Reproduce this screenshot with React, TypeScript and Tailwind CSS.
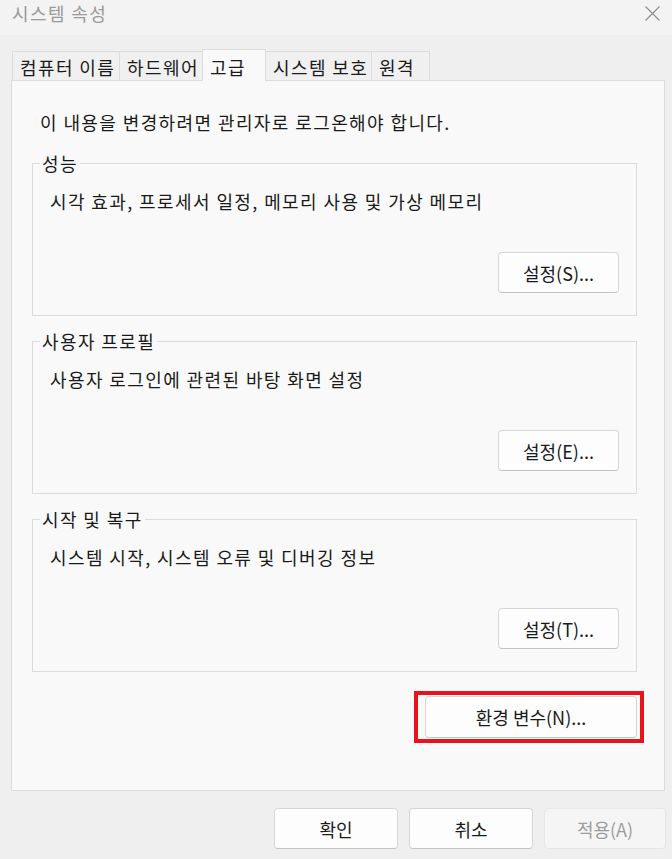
const tabs = [
  { label: "컴퓨터 이름", w: "w-[108px]" },
  { label: "하드웨어", w: "w-[84px]" },
  { label: "고급", w: "w-[64px]", active: true },
  { label: "시스템 보호", w: "w-[107px]" },
  { label: "원격", w: "w-[59px]" },
];

const groups = [
  {
    title: "성능",
    desc: "시각 효과, 프로세서 일정, 메모리 사용 및 가상 메모리",
    btn: "설정(S)...",
  },
  {
    title: "사용자 프로필",
    desc: "사용자 로그인에 관련된 바탕 화면 설정",
    btn: "설정(E)...",
  },
  {
    title: "시작 및 복구",
    desc: "시스템 시작, 시스템 오류 및 디버깅 정보",
    btn: "설정(T)...",
  },
];

const btnClass =
  "flex items-center justify-center rounded-[4px] border border-[#d6d6d6] border-b-[#c4c4c4] bg-[#fdfdfd] text-[18px] leading-[24px] tracking-normal text-[#1a1a1a]";

const App = () => {
  return (
    <div
      className="w-[672px] h-[859px] overflow-hidden bg-[#efefef] text-[#1a1a1a] tracking-[1.4px]"
      style={{ fontFamily: '"Noto Sans CJK KR", "Noto Sans", sans-serif' }}
    >
      {/* title bar */}
      <div className="flex justify-between h-[35px] bg-[#f3f3f3] pl-[12px] pr-[12px]">
        <span className="pt-[1px] text-[18px] leading-[24px] text-[#9a9a9a]">
          시스템 속성
        </span>
        <svg
          width="15"
          height="15"
          viewBox="0 0 15 15"
          className="mt-[6px]"
          stroke="#8c8c8c"
          strokeWidth="1.1"
        >
          <line x1="0.5" y1="0.5" x2="14.5" y2="14.5" />
          <line x1="14.5" y1="0.5" x2="0.5" y2="14.5" />
        </svg>
      </div>

      {/* tabs */}
      <div className="mt-[14px] flex items-end h-[31px] pl-[12px]">
        {tabs.map((t, i) => (
          <div
            key={t.label}
            className={`${t.w} ${i > 0 ? "-ml-px" : ""} ${
              t.active
                ? "relative z-10 h-[32px] -mb-px bg-[#f9f9f9]"
                : "h-[29px] bg-[#f0f0f0]"
            } flex items-center pt-[2px] pl-[7px] border border-b-0 border-[#dcdcdc] text-[18px] leading-[24px] whitespace-nowrap`}
          >
            {t.label}
          </div>
        ))}
      </div>

      {/* panel */}
      <div className="ml-[11px] w-[654px] h-[711px] border border-[#dcdcdc] bg-[#f9f9f9] pt-[29px]">
        <p className="pl-[28px] text-[18px] leading-[24px]">
          이 내용을 변경하려면 관리자로 로그온해야 합니다.
        </p>

        <div className="ml-[20px] w-[605px] mt-[17px] flex flex-col">
          {groups.map((g, i) => (
            <fieldset
              key={g.title}
              className={`${i > 0 ? "mt-[13px]" : ""} h-[165px] border border-[#dcdcdc]`}
            >
              <legend className="ml-[7px] px-[2px] text-[18px] leading-[24px]">
                {g.title}
              </legend>
              <div className="flex flex-col px-[17px]">
                <p className="pt-[14px] text-[18px] leading-[24px]">{g.desc}</p>
                <button className={`${btnClass} self-end mt-[39px] w-[121px] h-[41px]`}>
                  {g.btn}
                </button>
              </div>
            </fieldset>
          ))}

          <div className="relative self-end mt-[24px]">
            <button className={`${btnClass} w-[212px] h-[42px]`}>환경 변수(N)...</button>
            <div className="absolute -left-[11px] -top-[5px] -right-[7px] -bottom-[5px] border-4 border-[#e8141c] pointer-events-none" />
          </div>
        </div>
      </div>

      {/* footer buttons */}
      <div className="mt-[17px] flex justify-end gap-[11px] pr-[6px]">
        <button className={`${btnClass} w-[124px] h-[41px]`}>확인</button>
        <button className={`${btnClass} w-[124px] h-[41px]`}>취소</button>
        <button className="flex items-center justify-center w-[122px] h-[41px] rounded-[4px] border border-[#e6e6e6] bg-[#f5f5f5] text-[18px] leading-[24px] tracking-normal text-[#9d9d9d]">
          적용(A)
        </button>
      </div>
    </div>
  );
};

export default App;
